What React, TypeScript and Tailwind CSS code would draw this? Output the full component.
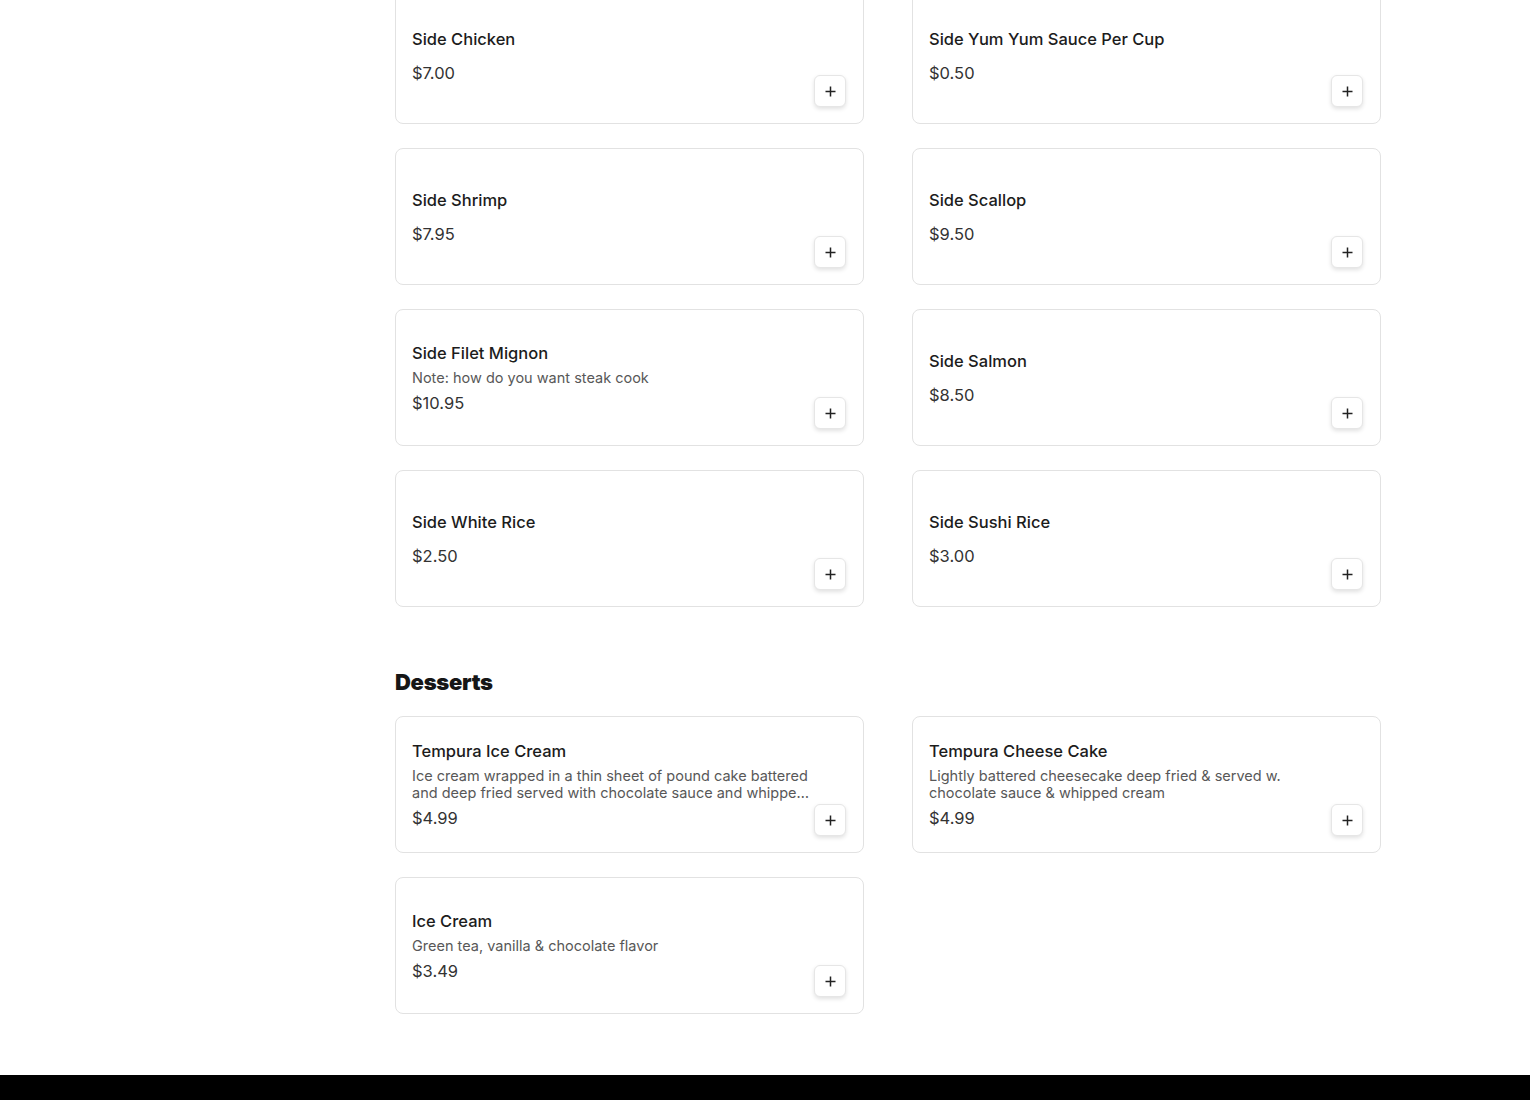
import React from "react";

type Item = { name: string; price: string; desc?: string };

const sides: Item[] = [
  { name: "Side Chicken", price: "$7.00" },
  { name: "Side Yum Yum Sauce Per Cup", price: "$0.50" },
  { name: "Side Shrimp", price: "$7.95" },
  { name: "Side Scallop", price: "$9.50" },
  { name: "Side Filet Mignon", price: "$10.95", desc: "Note: how do you want steak cook" },
  { name: "Side Salmon", price: "$8.50" },
  { name: "Side White Rice", price: "$2.50" },
  { name: "Side Sushi Rice", price: "$3.00" },
];

const desserts: Item[] = [
  {
    name: "Tempura Ice Cream",
    price: "$4.99",
    desc: "Ice cream wrapped in a thin sheet of pound cake battered and deep fried served with chocolate sauce and whipped cream",
  },
  {
    name: "Tempura Cheese Cake",
    price: "$4.99",
    desc: "Lightly battered cheesecake deep fried & served w. chocolate sauce & whipped cream",
  },
  { name: "Ice Cream", price: "$3.49", desc: "Green tea, vanilla & chocolate flavor" },
];

function MenuCard({ item }: { item: Item }) {
  return (
    <div className="h-[137px] rounded-lg border border-[#e2e2e2] bg-white flex pl-4 pr-[17px]">
      <div className="flex-1 min-w-0 flex flex-col justify-center">
        <div className="text-[16.5px] font-medium text-[#1c1c1c] leading-6">{item.name}</div>
        {item.desc && (
          <div className="mt-[4px] text-[14.5px] text-[#585858] leading-[17px] line-clamp-2">{item.desc}</div>
        )}
        <div className={`text-[16.5px] text-[#333] leading-6 ${item.desc ? "mt-[5px]" : "mt-[10px]"}`}>
          {item.price}
        </div>
      </div>
      <div className="self-end pb-4">
        <button className="w-8 h-8 rounded-md border border-[#e6e6e6] bg-white shadow-[0_2px_4px_rgba(0,0,0,0.12)] flex items-center justify-center text-[#222]">
          <svg width="11" height="11" viewBox="0 0 11 11">
            <path d="M5.5 0.5v10M0.5 5.5h10" stroke="currentColor" strokeWidth="1.5" />
          </svg>
        </button>
      </div>
    </div>
  );
}

export default function App() {
  return (
    <div className="min-h-[1100px] bg-white flex flex-col" style={{ fontFamily: "Inter, 'Liberation Sans', sans-serif" }}>
      <div className="pl-[395px] -mt-[13px]">
        <div className="w-[986px]">
          <div className="grid grid-cols-2 gap-x-12 gap-y-6">
            {sides.map((it) => (
              <MenuCard key={it.name} item={it} />
            ))}
          </div>
          <h2 className="mt-[61px] text-[22px] font-black text-[#161616] leading-7 tracking-[-0.3px]">Desserts</h2>
          <div className="mt-5 grid grid-cols-2 gap-x-12 gap-y-6">
            {desserts.map((it) => (
              <MenuCard key={it.name} item={it} />
            ))}
          </div>
        </div>
      </div>
      <div className="mt-[61px] h-[60px] bg-black" />
    </div>
  );
}
